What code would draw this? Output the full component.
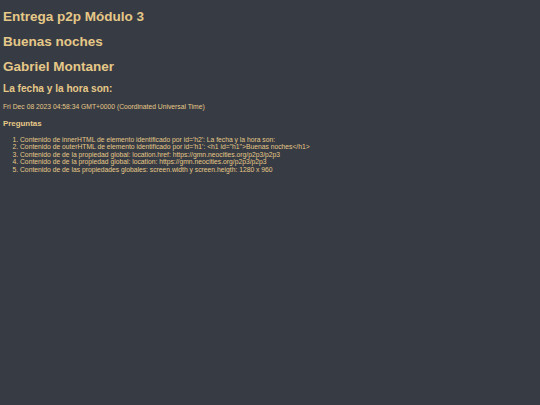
export default function App() {
  return (
    <div className="min-h-screen bg-[#373c44] text-[#e6c888] font-['Liberation_Sans',Arial,sans-serif] pt-[9px] px-[3px]">
      <h1 className="text-[13.5px] leading-[16px] font-bold">Entrega p2p Módulo 3</h1>
      <h1 className="text-[13.5px] leading-[16px] font-bold mt-[9px]">Buenas noches</h1>
      <h1 className="text-[13.5px] leading-[16px] font-bold mt-[9px]">Gabriel Montaner</h1>
      <h2 className="text-[10.1px] leading-[12px] font-bold mt-[8px]">La fecha y la hora son:</h2>
      <p className="text-[6.75px] leading-[8px] mt-[8px]">Fri Dec 08 2023 04:58:34 GMT+0000 (Coordinated Universal Time)</p>
      <h3 className="text-[7.9px] leading-[9px] font-bold mt-[8px]">Preguntas</h3>
      <ol className="list-decimal pl-[17px] mt-[7.5px] text-[6.75px] leading-[7.6px]">
        <li>Contenido de innerHTML de elemento identificado por id='h2': La fecha y la hora son:</li>
        <li>Contenido de outerHTML de elemento identificado por id='h1': &lt;h1 id="h1"&gt;Buenas noches&lt;/h1&gt;</li>
        <li>Contenido de de la propiedad global: location.href: https://gmn.neocities.org/p2p3/p2p3</li>
        <li>Contenido de de la propiedad global: location: https://gmn.neocities.org/p2p3/p2p3</li>
        <li>Contenido de de las propiedades globales: screen.width y screen.heigth: 1280 x 960</li>
      </ol>
    </div>
  );
}
